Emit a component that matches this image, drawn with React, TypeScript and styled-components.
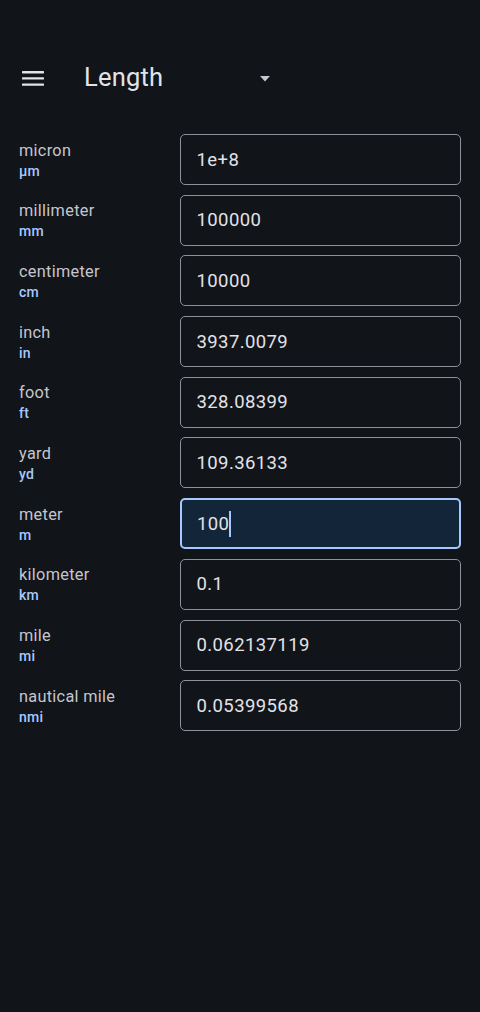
import React, { useState } from 'react';
import styled, { createGlobalStyle } from 'styled-components';

const units = [
  { name: 'micron', symbol: 'µm', value: '1e+8' },
  { name: 'millimeter', symbol: 'mm', value: '100000' },
  { name: 'centimeter', symbol: 'cm', value: '10000' },
  { name: 'inch', symbol: 'in', value: '3937.0079' },
  { name: 'foot', symbol: 'ft', value: '328.08399' },
  { name: 'yard', symbol: 'yd', value: '109.36133' },
  { name: 'meter', symbol: 'm', value: '100' },
  { name: 'kilometer', symbol: 'km', value: '0.1' },
  { name: 'mile', symbol: 'mi', value: '0.062137119' },
  { name: 'nautical mile', symbol: 'nmi', value: '0.05399568' },
];

const App: React.FC = () => {
  const [active] = useState('meter');

  return (
    <>
      <GlobalStyle />
      <Page>
        <Header>
          <MenuButton aria-label='menu'>
            <svg width='22' height='15' viewBox='0 0 22 15'>
              <rect x='0' y='0' width='22' height='2.4' rx='0.6' fill='#e2e2e9' />
              <rect x='0' y='6.2' width='22' height='2.4' rx='0.6' fill='#e2e2e9' />
              <rect x='0' y='12.4' width='22' height='2.4' rx='0.6' fill='#e2e2e9' />
            </svg>
          </MenuButton>
          <Select>
            <span>Length</span>
            <svg width='10' height='6' viewBox='0 0 10 6'>
              <path d='M0 0 L10 0 L5 5.5 Z' fill='#c4c6d0' />
            </svg>
          </Select>
        </Header>
        <List>
          {units.map((u) => (
            <Row key={u.name}>
              <Label>
                <Name>{u.name}</Name>
                <Symbol>{u.symbol}</Symbol>
              </Label>
              <Field focused={u.name === active}>
                {u.value}
                {u.name === active && <Caret />}
              </Field>
            </Row>
          ))}
        </List>
      </Page>
    </>
  );
};

const GlobalStyle = createGlobalStyle`
  body {
    margin: 0;
    background: #111418;
    font-family: Roboto, 'Noto Sans', sans-serif;
  }
`;

const Page = styled.div`
  width: 480px;
  min-height: 1012px;
  background: #111418;
  padding-top: 50px;
  box-sizing: border-box;
`;

const Header = styled.div`
  height: 56px;
  display: flex;
  align-items: center;
  padding-left: 22px;
`;

const MenuButton = styled.div`
  display: flex;
  align-items: center;
  width: 62px;
  height: 22px;
`;

const Select = styled.div`
  display: flex;
  align-items: center;
  width: 186px;
  justify-content: space-between;
  color: #e2e2e9;
  font-size: 25.5px;
  letter-spacing: 0.2px;
  span {
    margin-top: -2px;
  }
  svg {
    margin-top: 1px;
  }
`;

const List = styled.div`
  display: flex;
  flex-direction: column;
  gap: 9.7px;
  padding: 28px 19px 0 19px;
`;

const Row = styled.div`
  display: flex;
  align-items: center;
  height: 51px;
`;

const Label = styled.div`
  width: 161px;
  display: flex;
  flex-direction: column;
  margin-top: 2px;
`;

const Name = styled.div`
  color: #c4c6cf;
  font-size: 16.3px;
  line-height: 20px;
  letter-spacing: 0.3px;
`;

const Symbol = styled.div`
  color: #a6c8ff;
  font-size: 14px;
  font-weight: 500;
  line-height: 20px;
  letter-spacing: 0.2px;
`;

const Field = styled.div<{ focused?: boolean }>`
  flex: 1;
  height: 51px;
  box-sizing: border-box;
  display: flex;
  align-items: center;
  padding-left: ${(p) => (p.focused ? '15px' : '15.5px')};
  border: ${(p) => (p.focused ? '2px solid #a6c8ff' : '1.5px solid #8e9199')};
  border-radius: 5px;
  background: ${(p) => (p.focused ? '#132538' : 'transparent')};
  color: #e2e2e9;
  font-size: 18.5px;
  letter-spacing: 0.4px;
`;

const Caret = styled.span`
  display: inline-block;
  width: 2px;
  height: 26px;
  background: #a6c8ff;
`;

export default App;
